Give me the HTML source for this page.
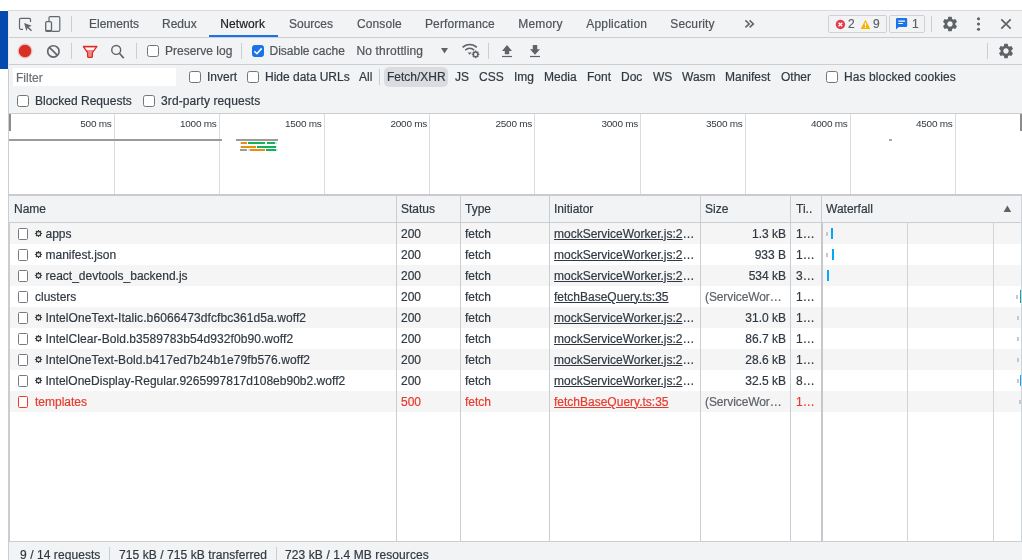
<!DOCTYPE html>
<html>
<head>
<meta charset="utf-8">
<title>DevTools - Network</title>
<style>
html,body{margin:0;padding:0;}
body{width:1022px;height:560px;overflow:hidden;background:#fff;position:relative;font-family:"Liberation Sans",sans-serif;font-size:12px;color:#202124;}
.abs{position:absolute;}
.t{position:absolute;white-space:nowrap;font-size:12px;line-height:14px;color:#303942;-webkit-text-stroke:0.200px;}
.tab{color:#505459;top:17px;}
.tab.sel{color:#202124;}
.bar{position:absolute;left:9px;right:0;background:#f1f3f4;}
.hl{position:absolute;background:#cacdd1;}
.cb{position:absolute;width:12px;height:12px;border:1px solid #767676;border-radius:2.500px;background:#fff;box-sizing:border-box;}
.f{top:70px;}
.row{position:absolute;left:10px;width:1012px;height:21px;}
.odd{background:#f5f5f5;}
.ico{position:absolute;left:8px;top:5px;width:10px;height:12px;border:1px solid #757a80;border-radius:1.500px;background:#fff;box-sizing:border-box;}
.row .t{top:4px;}
.u{text-decoration:underline;text-decoration-thickness:0.800px;text-underline-offset:1px;}
.red,.red .t{color:#e83a2d;}
.red .ico{border-color:#e83a2d;}
.ov{position:absolute;font-size:10px;letter-spacing:-0.250px;line-height:12px;top:118.400px;color:#303942;white-space:nowrap;text-align:right;width:60px;transform:scaleY(0.880);transform-origin:0 10.400px;}
</style>
</head>
<body>
<div id="w" style="position:absolute;left:0;top:0;width:1022px;height:560px;will-change:transform;">
<!-- left blue strip -->
<div class="abs" style="left:0;top:11px;width:8px;height:57.500px;background:#0549ae;"></div>
<!-- left border -->
<div class="hl" style="left:8px;top:11px;width:1px;height:58px;background:#e6e8ea;"></div>
<div class="hl" style="left:8.300px;top:68.500px;width:1.300px;height:492px;"></div>

<!-- top tab bar -->
<div class="bar" style="top:11px;height:26px;"></div>
<div class="hl" style="left:8px;top:10px;width:1014px;height:1px;background:#d7d9dc;"></div>
<div class="hl" style="left:9px;top:37px;width:1013px;height:1px;"></div>

<!-- second toolbar -->
<div class="bar" style="top:38px;height:26px;"></div>
<div class="hl" style="left:9px;top:64px;width:1013px;height:1px;"></div>

<!-- filter bar -->
<div class="bar" style="top:65px;height:48px;"></div>
<div class="hl" style="left:9px;top:113px;width:1013px;height:1px;"></div>

<!-- TABS -->
<div class="t tab" style="left:89px;">Elements</div>
<div class="t tab" style="left:162px;">Redux</div>
<div class="t tab sel" style="left:220.300px;letter-spacing:0.100px;">Network</div>
<div class="abs" style="left:209px;top:35px;width:69px;height:2px;background:#1a73e8;"></div>
<div class="t tab" style="left:289px;">Sources</div>
<div class="t tab" style="left:357px;letter-spacing:0.120px;">Console</div>
<div class="t tab" style="left:425px;letter-spacing:0.100px;">Performance</div>
<div class="t tab" style="left:518.300px;letter-spacing:0.150px;">Memory</div>
<div class="t tab" style="left:586.300px;letter-spacing:0.200px;">Application</div>
<div class="t tab" style="left:670.300px;letter-spacing:0.120px;">Security</div>

<svg class="abs" style="left:744px;top:19px;" width="12" height="10" viewBox="0 0 12 10"><path d="M1.400 1.400l3.800 3.500-3.800 3.500M5.600 1.400l3.800 3.500-3.800 3.500" fill="none" stroke="#5f6368" stroke-width="1.500"/></svg>

<!-- inspect icon -->
<svg class="abs" style="left:17px;top:15px;" width="18" height="18" viewBox="0 0 18 18">
<path d="M13.500 7V4.600a1.200 1.200 0 0 0-1.200-1.200H3.700a1.200 1.200 0 0 0-1.200 1.200v8.500a1.200 1.200 0 0 0 1.200 1.200H6" fill="none" stroke="#63676c" stroke-width="1.200"/>
<path d="M7.100 8.100l7.700 2.600-3.100 1.250 3.300 3.300-1.050 1.050-3.300-3.300-1.250 3.100z" fill="#63676c"/>
</svg>
<!-- device icon -->
<svg class="abs" style="left:43px;top:14px;" width="20" height="20" viewBox="0 0 20 20">
<path d="M6 7.5V3.8a1.2 1.2 0 0 1 1.2-1.2h8.4a1.2 1.2 0 0 1 1.2 1.2v12.3a1.2 1.2 0 0 1-1.2 1.2H8.6" fill="none" stroke="#63676c" stroke-width="1.2"/>
<rect x="2.7" y="7.7" width="5.8" height="9.7" rx="1.3" fill="none" stroke="#63676c" stroke-width="1.3"/>
<rect x="2.7" y="15.9" width="5.8" height="1.5" fill="#63676c"/>
</svg>
<div class="hl" style="left:71px;top:16px;width:1px;height:16px;"></div>

<!-- badges -->
<div class="abs" style="left:828px;top:15px;width:59px;height:18px;box-sizing:border-box;border:1px solid #cfd1d4;border-radius:2px;"></div>
<div class="abs" style="left:889px;top:15px;width:36px;height:18px;box-sizing:border-box;border:1px solid #cfd1d4;border-radius:2px;"></div>
<svg class="abs" style="left:835px;top:19px;" width="11" height="11" viewBox="0 0 11 11">
<circle cx="5.400" cy="5.500" r="4.700" fill="#e6394a"/>
<path d="M3.6 3.7l3.6 3.6M7.2 3.7L3.6 7.3" stroke="#fff" stroke-width="1.3"/>
</svg>
<div class="t" style="left:848px;top:17px;color:#5f6368;">2</div>
<svg class="abs" style="left:860px;top:19px;" width="11" height="11" viewBox="0 0 11 11">
<path d="M5.5 0.8L10.3 9.9H0.7z" fill="#f4b400"/>
<path d="M5.5 3.8v3.2M5.5 7.8v1.1" stroke="#fff" stroke-width="1.2"/>
</svg>
<div class="t" style="left:873px;top:17px;color:#5f6368;">9</div>
<svg class="abs" style="left:895px;top:17px;" width="13" height="13" viewBox="0 0 13 13">
<path d="M2.2 1h8.8a1.2 1.2 0 0 1 1.2 1.2v6.6A1.2 1.2 0 0 1 11 10H3.6L1 12.6V2.2A1.2 1.2 0 0 1 2.2 1z" fill="#1a73e8"/>
<path d="M3.300 4.200h6.600M3.300 6.500h4.600" stroke="#fff" stroke-width="1.200"/>
</svg>
<div class="t" style="left:912px;top:17px;color:#5f6368;">1</div>
<div class="hl" style="left:931px;top:16px;width:1px;height:16px;"></div>

<!-- gear 1 -->
<svg class="abs gear" style="left:941px;top:15px;" width="18" height="18" viewBox="0 0 24 24"><path fill="#5f6368" d="M19.14 12.94c.04-.3.06-.61.06-.94 0-.32-.02-.64-.07-.94l2.03-1.58a.49.49 0 0 0 .12-.61l-1.92-3.32a.488.488 0 0 0-.59-.22l-2.39.96c-.5-.38-1.03-.7-1.62-.94l-.36-2.54a.484.484 0 0 0-.48-.41h-3.84c-.24 0-.43.17-.47.41l-.36 2.54c-.59.24-1.13.57-1.62.94l-2.39-.96c-.22-.08-.47 0-.59.22L2.74 8.87c-.12.21-.08.47.12.61l2.03 1.58c-.05.3-.09.63-.09.94s.02.64.07.94l-2.03 1.58a.49.49 0 0 0-.12.61l1.92 3.32c.12.22.37.29.59.22l2.39-.96c.5.38 1.03.7 1.62.94l.36 2.54c.05.24.24.41.48.41h3.84c.24 0 .44-.17.47-.41l.36-2.54c.59-.24 1.13-.56 1.62-.94l2.39.96c.22.08.47 0 .59-.22l1.92-3.32c.12-.22.07-.47-.12-.61l-2.01-1.58zM12 15.6c-1.98 0-3.600-1.62-3.600-3.600s1.620-3.600 3.600-3.600 3.600 1.620 3.600 3.600-1.620 3.600-3.600 3.600z"/></svg>
<!-- dots -->
<svg class="abs" style="left:976px;top:16px;" width="5" height="16" viewBox="0 0 5 16"><circle cx="2.500" cy="2.800" r="1.550" fill="#5f6368"/><circle cx="2.500" cy="8" r="1.550" fill="#5f6368"/><circle cx="2.500" cy="13.200" r="1.550" fill="#5f6368"/></svg>
<!-- close -->
<svg class="abs" style="left:1000px;top:18px;" width="12" height="12" viewBox="0 0 12 12"><path d="M1.300 1.300l9.400 9.400M10.700 1.300L1.300 10.700" stroke="#5f6368" stroke-width="1.700"/></svg>

<!-- TOOLBAR 2 -->
<div class="abs" style="left:17px;top:43px;width:16px;height:16px;border-radius:50%;background:radial-gradient(circle,#d93025 0,#d93025 5.700px,rgba(217,48,37,0.330) 6.500px,rgba(217,48,37,0) 8px);"></div>
<svg class="abs" style="left:46px;top:44px;" width="15" height="15" viewBox="0 0 15 15"><circle cx="7.400" cy="7.400" r="5.700" fill="none" stroke="#63666a" stroke-width="1.650"/><path d="M3.400 3.400l8 8" stroke="#63666a" stroke-width="1.650"/></svg>
<div class="hl" style="left:71px;top:43px;width:1px;height:16px;"></div>
<svg class="abs" style="left:82px;top:45px;" width="16" height="14" viewBox="0 0 16 14"><path d="M3.800 5.100H12.200L10.400 7.600V12.300H5.600V7.600z" fill="#ea8a84"/><path d="M1.400 1.600H14.800L10.400 7.600V11.500Q10.400 12.300 9.600 12.300H6.400Q5.600 12.300 5.600 11.500V7.600z" fill="none" stroke="#de2a20" stroke-width="1.250" stroke-linejoin="round"/><path d="M1 1.500h14.200" stroke="#de2a20" stroke-width="1.400"/></svg>
<svg class="abs" style="left:109px;top:43px;" width="17" height="17" viewBox="0 0 17 17"><circle cx="7.200" cy="6.900" r="4.450" fill="none" stroke="#5f6368" stroke-width="1.450"/><path d="M10.400 10.200l4.300 4.900" stroke="#5f6368" stroke-width="1.600"/></svg>
<div class="hl" style="left:136px;top:43px;width:1px;height:16px;"></div>
<div class="cb" style="left:147px;top:45px;"></div>
<div class="t" style="left:165px;top:44px;color:#505459;">Preserve log</div>
<div class="hl" style="left:241px;top:43px;width:1px;height:16px;"></div>
<div class="cb" style="left:252px;top:45px;background:#1a73e8;border-color:#1a73e8;"></div>
<svg class="abs" style="left:252px;top:45px;" width="12" height="12" viewBox="0 0 12 12"><path d="M2.400 6.200l2.500 2.500 4.800-5.300" fill="none" stroke="#fff" stroke-width="1.6"/></svg>
<div class="t" style="left:269.500px;top:44px;color:#505459;">Disable cache</div>
<div class="t" style="left:356.500px;top:44px;color:#505459;letter-spacing:0.150px;">No throttling</div>
<svg class="abs" style="left:440px;top:47px;" width="9" height="7" viewBox="0 0 9 7"><path d="M1 1h7L4.5 6.4z" fill="#5f6368"/></svg>
<!-- wifi gear -->
<svg class="abs" style="left:461px;top:42px;" width="20" height="18" viewBox="0 0 20 18">
<path d="M1.6 5.4a10 10 0 0 1 14.2 0" fill="none" stroke="#5f6368" stroke-width="1.5"/>
<path d="M4.2 8.2a6.4 6.4 0 0 1 9 0" fill="none" stroke="#5f6368" stroke-width="1.5"/>
<path d="M6.6 10.4h4.2l-2.1 2.4z" fill="#5f6368"/>
<circle cx="14.6" cy="12.4" r="2.3" fill="none" stroke="#5f6368" stroke-width="1.5"/>
<path d="M14.6 8.6v1.4M14.6 14.8v1.4M10.8 12.4h1.4M17 12.4h1.4M11.9 9.7l1 1M16.3 14.1l1 1M11.9 15.1l1-1M16.3 10.7l1-1" stroke="#5f6368" stroke-width="1.3"/>
</svg>
<div class="hl" style="left:488px;top:43px;width:1px;height:16px;"></div>
<svg class="abs" style="left:501px;top:44px;" width="12" height="14" viewBox="0 0 12 14"><path d="M6 1L11 7H8.2v3.2H3.800V7H1z" fill="#5f6368"/><rect x="1" y="11.900" width="10" height="1.2" fill="#5f6368"/></svg>
<svg class="abs" style="left:529px;top:44px;" width="12" height="14" viewBox="0 0 12 14"><path d="M6 10.800L11 5.300H8.200V1H3.800v4.300H1z" fill="#5f6368"/><rect x="1" y="11.900" width="10" height="1.200" fill="#5f6368"/></svg>
<div class="hl" style="left:987px;top:43px;width:1px;height:16px;"></div>
<svg class="abs gear" style="left:997px;top:42px;" width="18" height="18" viewBox="0 0 24 24"><path fill="#5f6368" d="M19.140 12.940c.04-.3.060-.61.060-.94 0-.32-.02-.64-.07-.94l2.030-1.580a.49.49 0 0 0 .12-.61l-1.920-3.320a.488.488 0 0 0-.59-.22l-2.390.96c-.5-.38-1.030-.7-1.620-.94l-.36-2.540a.484.484 0 0 0-.48-.41h-3.840c-.24 0-.43.170-.47.410l-.36 2.540c-.59.240-1.130.57-1.620.94l-2.390-.96c-.22-.08-.47 0-.59.220L2.740 8.870c-.12.210-.08.470.12.610l2.030 1.580c-.05.300-.09.630-.09.940s.02.640.07.940l-2.030 1.580a.49.49 0 0 0-.12.610l1.920 3.320c.12.220.37.290.59.220l2.390-.96c.5.380 1.030.7 1.620.94l.36 2.540c.05.240.24.410.48.410h3.840c.24 0 .44-.17.470-.41l.36-2.540c.59-.24 1.130-.56 1.620-.94l2.390.96c.22.080.47 0 .59-.22l1.920-3.320c.12-.22.070-.47-.12-.61l-2.010-1.580zM12 15.600c-1.980 0-3.600-1.620-3.600-3.600s1.620-3.600 3.600-3.600 3.600 1.620 3.600 3.600-1.620 3.600-3.600 3.600z"/></svg>

<!-- FILTER BAR -->
<div class="abs" style="left:13px;top:68px;width:163px;height:18px;background:#fff;"></div>
<div class="t" style="left:16px;top:71px;color:#6b6f75;">Filter</div>
<div class="cb" style="left:189px;top:71px;"></div>
<div class="t f" style="left:207px;">Invert</div>
<div class="cb" style="left:247px;top:71px;"></div>
<div class="t f" style="left:265px;">Hide data URLs</div>
<div class="t f" style="left:359px;">All</div>
<div class="hl" style="left:379px;top:69px;width:1px;height:16px;"></div>
<div class="abs" style="left:384px;top:67px;width:64px;height:20px;background:#dadce0;border-radius:5px;"></div>
<div class="t f" style="left:387px;">Fetch/XHR</div>
<div class="t f" style="left:455px;">JS</div>
<div class="t f" style="left:479px;">CSS</div>
<div class="t f" style="left:514px;">Img</div>
<div class="t f" style="left:544px;">Media</div>
<div class="t f" style="left:587px;">Font</div>
<div class="t f" style="left:621px;">Doc</div>
<div class="t f" style="left:653px;">WS</div>
<div class="t f" style="left:682px;">Wasm</div>
<div class="t f" style="left:725px;">Manifest</div>
<div class="t f" style="left:781px;">Other</div>
<div class="cb" style="left:826px;top:71px;"></div>
<div class="t f" style="left:844px;letter-spacing:0.100px;">Has blocked cookies</div>
<div class="cb" style="left:17px;top:95px;"></div>
<div class="t" style="left:35px;top:94px;">Blocked Requests</div>
<div class="cb" style="left:143px;top:95px;"></div>
<div class="t" style="left:161px;top:94px;letter-spacing:0.110px;">3rd-party requests</div>

<!-- OVERVIEW -->
<div class="abs" style="left:9px;top:114px;width:1013px;height:80px;background:#fff;"></div>
<div class="abs" style="left:113.5px;top:114px;width:1px;height:80px;background:#dcdcdc;"></div>
<div class="ov" style="left:51.6px;">500 ms</div>
<div class="abs" style="left:218.5px;top:114px;width:1px;height:80px;background:#dcdcdc;"></div>
<div class="ov" style="left:156.6px;">1000 ms</div>
<div class="abs" style="left:323.5px;top:114px;width:1px;height:80px;background:#dcdcdc;"></div>
<div class="ov" style="left:261.6px;">1500 ms</div>
<div class="abs" style="left:429.0px;top:114px;width:1px;height:80px;background:#dcdcdc;"></div>
<div class="ov" style="left:367.1px;">2000 ms</div>
<div class="abs" style="left:534.0px;top:114px;width:1px;height:80px;background:#dcdcdc;"></div>
<div class="ov" style="left:472.1px;">2500 ms</div>
<div class="abs" style="left:640px;top:114px;width:1px;height:80px;background:#dcdcdc;"></div>
<div class="ov" style="left:578.1px;">3000 ms</div>
<div class="abs" style="left:744.5px;top:114px;width:1px;height:80px;background:#dcdcdc;"></div>
<div class="ov" style="left:682.6px;">3500 ms</div>
<div class="abs" style="left:849.5px;top:114px;width:1px;height:80px;background:#dcdcdc;"></div>
<div class="ov" style="left:787.6px;">4000 ms</div>
<div class="abs" style="left:954.5px;top:114px;width:1px;height:80px;background:#dcdcdc;"></div>
<div class="ov" style="left:892.6px;">4500 ms</div>
<div class="abs" style="left:9px;top:114px;width:2px;height:17px;background:#8c8c8c;"></div>
<div class="abs" style="left:1020px;top:114px;width:2px;height:17px;background:#8c8c8c;"></div>
<div class="abs" style="left:9px;top:139.300px;width:213px;height:2.200px;background:#9b9b9b;"></div>
<div class="abs" style="left:236px;top:139.300px;width:42px;height:2px;background:#9b9b9b;"></div>
<div class="abs" style="left:239.5px;top:142.300px;width:1.5px;height:2px;background:#c9e6f7;"></div>
<div class="abs" style="left:241px;top:142.300px;width:6.2px;height:2px;background:#e8920c;"></div>
<div class="abs" style="left:248px;top:142.300px;width:17.2px;height:2px;background:#12b355;"></div>
<div class="abs" style="left:267px;top:142.300px;width:8.4px;height:2px;background:#12b355;"></div>
<div class="abs" style="left:275.4px;top:142.300px;width:1.6px;height:2px;background:#c9e6f7;"></div>
<div class="abs" style="left:239.5px;top:145.5px;width:1.5px;height:2px;background:#c9e6f7;"></div>
<div class="abs" style="left:241px;top:145.5px;width:15.4px;height:2px;background:#e8920c;"></div>
<div class="abs" style="left:257.4px;top:145.5px;width:18.8px;height:2px;background:#12b355;"></div>
<div class="abs" style="left:276.2px;top:145.5px;width:1.3px;height:2px;background:#c9e6f7;"></div>
<div class="abs" style="left:240.2px;top:148.8px;width:6.8px;height:2px;background:#9b9b9b;"></div>
<div class="abs" style="left:248px;top:148.8px;width:2px;height:2px;background:#c9e6f7;"></div>
<div class="abs" style="left:250px;top:148.8px;width:15px;height:2px;background:#e8920c;"></div>
<div class="abs" style="left:266px;top:148.8px;width:10.4px;height:2px;background:#12b355;"></div>
<div class="abs" style="left:276.4px;top:148.8px;width:1.6px;height:2px;background:#c9e6f7;"></div>
<div class="abs" style="left:888.5px;top:139px;width:3.0px;height:2px;background:#a8a8a8;"></div>

<!-- TABLE -->
<div class="hl" style="left:9px;top:194px;width:1013px;height:2px;background:#c9cbcf;"></div>
<div class="bar" style="top:196px;height:26px;"></div>
<div class="hl" style="left:9px;top:222px;width:1013px;height:1px;"></div>
<div class="t" style="left:14px;top:202px;">Name</div>
<div class="t" style="left:401px;top:202px;">Status</div>
<div class="t" style="left:465px;top:202px;">Type</div>
<div class="t" style="left:554px;top:202px;">Initiator</div>
<div class="t" style="left:705px;top:202px;">Size</div>
<div class="t" style="left:796px;top:202px;">Ti..</div>
<div class="t" style="left:826px;top:202px;">Waterfall</div>
<svg class="abs" style="left:1003px;top:205px;" width="9" height="8" viewBox="0 0 9 8"><path d="M4.4 0.500L8.200 7H0.600z" fill="#5f6368"/></svg>
<div class="row odd" style="top:223px;">
<div class="ico"></div>
<svg class="abs" style="left:24px;top:5.800px;" width="9" height="9" viewBox="0 0 9 9"><path d="M4.500 0.900v7.200M0.900 4.500h7.200M1.950 1.950l5.100 5.100M1.950 7.050l5.100-5.100" stroke="#3c4043" stroke-width="1.150"/><circle cx="4.500" cy="4.500" r="2.750" fill="#3c4043"/><circle cx="4.500" cy="4.500" r="1.500" fill="#fff"/><path d="M4.500 4.500V3.300" stroke="#3c4043" stroke-width="0.500"/></svg>
<div class="t" style="left:35.5px;">apps</div>
<div class="t" style="left:391px;">200</div>
<div class="t" style="left:455px;">fetch</div>
<div class="t" style="left:544px;"><span class="u">mockServiceWorker.js:2</span>…</div>
<div class="t" style="right:236px;">1.3 kB</div>
<div class="t" style="left:786px;">1…</div>
</div>
<div class="row" style="top:244px;">
<div class="ico"></div>
<svg class="abs" style="left:24px;top:5.800px;" width="9" height="9" viewBox="0 0 9 9"><path d="M4.500 0.900v7.200M0.900 4.500h7.200M1.950 1.950l5.100 5.100M1.950 7.050l5.100-5.100" stroke="#3c4043" stroke-width="1.150"/><circle cx="4.500" cy="4.500" r="2.750" fill="#3c4043"/><circle cx="4.500" cy="4.500" r="1.500" fill="#fff"/><path d="M4.500 4.500V3.300" stroke="#3c4043" stroke-width="0.500"/></svg>
<div class="t" style="left:35.5px;">manifest.json</div>
<div class="t" style="left:391px;">200</div>
<div class="t" style="left:455px;">fetch</div>
<div class="t" style="left:544px;"><span class="u">mockServiceWorker.js:2</span>…</div>
<div class="t" style="right:236px;">933 B</div>
<div class="t" style="left:786px;">1…</div>
</div>
<div class="row odd" style="top:265px;">
<div class="ico"></div>
<svg class="abs" style="left:24px;top:5.800px;" width="9" height="9" viewBox="0 0 9 9"><path d="M4.500 0.900v7.200M0.900 4.500h7.200M1.950 1.950l5.100 5.100M1.950 7.050l5.100-5.100" stroke="#3c4043" stroke-width="1.150"/><circle cx="4.500" cy="4.500" r="2.750" fill="#3c4043"/><circle cx="4.500" cy="4.500" r="1.500" fill="#fff"/><path d="M4.500 4.500V3.300" stroke="#3c4043" stroke-width="0.500"/></svg>
<div class="t" style="left:35.5px;">react_devtools_backend.js</div>
<div class="t" style="left:391px;">200</div>
<div class="t" style="left:455px;">fetch</div>
<div class="t" style="left:544px;"><span class="u">mockServiceWorker.js:2</span>…</div>
<div class="t" style="right:236px;">534 kB</div>
<div class="t" style="left:786px;">3…</div>
</div>
<div class="row" style="top:286px;">
<div class="ico"></div>
<div class="t" style="left:25px;">clusters</div>
<div class="t" style="left:391px;">200</div>
<div class="t" style="left:455px;">fetch</div>
<div class="t u" style="left:544px;">fetchBaseQuery.ts:35</div>
<div class="t" style="left:695px;color:#5f6368;letter-spacing:-0.100px;">(ServiceWor…</div>
<div class="t" style="left:786px;">1…</div>
</div>
<div class="row odd" style="top:307px;">
<div class="ico"></div>
<svg class="abs" style="left:24px;top:5.800px;" width="9" height="9" viewBox="0 0 9 9"><path d="M4.500 0.900v7.200M0.900 4.500h7.200M1.950 1.950l5.100 5.100M1.950 7.050l5.100-5.100" stroke="#3c4043" stroke-width="1.150"/><circle cx="4.500" cy="4.500" r="2.750" fill="#3c4043"/><circle cx="4.500" cy="4.500" r="1.500" fill="#fff"/><path d="M4.500 4.500V3.300" stroke="#3c4043" stroke-width="0.500"/></svg>
<div class="t" style="left:35.5px;letter-spacing:0.087px;">IntelOneText-Italic.b6066473dfcfbc361d5a.woff2</div>
<div class="t" style="left:391px;">200</div>
<div class="t" style="left:455px;">fetch</div>
<div class="t" style="left:544px;"><span class="u">mockServiceWorker.js:2</span>…</div>
<div class="t" style="right:236px;">31.0 kB</div>
<div class="t" style="left:786px;">1…</div>
</div>
<div class="row" style="top:328px;">
<div class="ico"></div>
<svg class="abs" style="left:24px;top:5.800px;" width="9" height="9" viewBox="0 0 9 9"><path d="M4.500 0.900v7.200M0.900 4.500h7.200M1.950 1.950l5.100 5.100M1.950 7.050l5.100-5.100" stroke="#3c4043" stroke-width="1.150"/><circle cx="4.500" cy="4.500" r="2.750" fill="#3c4043"/><circle cx="4.500" cy="4.500" r="1.500" fill="#fff"/><path d="M4.500 4.500V3.300" stroke="#3c4043" stroke-width="0.500"/></svg>
<div class="t" style="left:35.5px;letter-spacing:0.071px;">IntelClear-Bold.b3589783b54d932f0b90.woff2</div>
<div class="t" style="left:391px;">200</div>
<div class="t" style="left:455px;">fetch</div>
<div class="t" style="left:544px;"><span class="u">mockServiceWorker.js:2</span>…</div>
<div class="t" style="right:236px;">86.7 kB</div>
<div class="t" style="left:786px;">1…</div>
</div>
<div class="row odd" style="top:349px;">
<div class="ico"></div>
<svg class="abs" style="left:24px;top:5.800px;" width="9" height="9" viewBox="0 0 9 9"><path d="M4.500 0.900v7.200M0.900 4.500h7.200M1.950 1.950l5.100 5.100M1.950 7.050l5.100-5.100" stroke="#3c4043" stroke-width="1.150"/><circle cx="4.500" cy="4.500" r="2.750" fill="#3c4043"/><circle cx="4.500" cy="4.500" r="1.500" fill="#fff"/><path d="M4.500 4.500V3.300" stroke="#3c4043" stroke-width="0.500"/></svg>
<div class="t" style="left:35.5px;letter-spacing:0.09px;">IntelOneText-Bold.b417ed7b24b1e79fb576.woff2</div>
<div class="t" style="left:391px;">200</div>
<div class="t" style="left:455px;">fetch</div>
<div class="t" style="left:544px;"><span class="u">mockServiceWorker.js:2</span>…</div>
<div class="t" style="right:236px;">28.6 kB</div>
<div class="t" style="left:786px;">1…</div>
</div>
<div class="row" style="top:370px;">
<div class="ico"></div>
<svg class="abs" style="left:24px;top:5.800px;" width="9" height="9" viewBox="0 0 9 9"><path d="M4.500 0.900v7.200M0.900 4.500h7.200M1.950 1.950l5.100 5.100M1.950 7.050l5.100-5.100" stroke="#3c4043" stroke-width="1.150"/><circle cx="4.500" cy="4.500" r="2.750" fill="#3c4043"/><circle cx="4.500" cy="4.500" r="1.500" fill="#fff"/><path d="M4.500 4.500V3.300" stroke="#3c4043" stroke-width="0.500"/></svg>
<div class="t" style="left:35.5px;letter-spacing:0.02px;">IntelOneDisplay-Regular.9265997817d108eb90b2.woff2</div>
<div class="t" style="left:391px;">200</div>
<div class="t" style="left:455px;">fetch</div>
<div class="t" style="left:544px;"><span class="u">mockServiceWorker.js:2</span>…</div>
<div class="t" style="right:236px;">32.5 kB</div>
<div class="t" style="left:786px;">8…</div>
</div>
<div class="row odd red" style="top:391px;">
<div class="ico"></div>
<div class="t" style="left:25px;">templates</div>
<div class="t" style="left:391px;">500</div>
<div class="t" style="left:455px;">fetch</div>
<div class="t u" style="left:544px;">fetchBaseQuery.ts:35</div>
<div class="t" style="left:695px;color:#5f6368;letter-spacing:-0.100px;">(ServiceWor…</div>
<div class="t" style="left:786px;">1…</div>
</div>
<div class="hl" style="left:396px;top:196px;width:1px;height:345px;"></div>
<div class="hl" style="left:460px;top:196px;width:1px;height:345px;"></div>
<div class="hl" style="left:549px;top:196px;width:1px;height:345px;"></div>
<div class="hl" style="left:700px;top:196px;width:1px;height:345px;"></div>
<div class="hl" style="left:790px;top:196px;width:1px;height:345px;"></div>
<div class="hl" style="left:821px;top:196px;width:1px;height:26px;"></div>
<div class="hl" style="left:821px;top:223px;width:2px;height:318px;background:#c6c8cc;"></div>
<div class="abs" style="left:907px;top:223px;width:1px;height:318px;background:#d4d4d4;"></div>
<div class="abs" style="left:993px;top:223px;width:1px;height:318px;background:#d4d4d4;"></div>
<div class="hl" style="left:1021px;top:196px;width:1px;height:345px;background:#cfd4dc;"></div>
<div class="abs" style="left:826px;top:231.5px;width:2px;height:4.5px;background:#c8c8c8;"></div>
<div class="abs" style="left:831px;top:228px;width:2px;height:11px;background:#03a9f4;"></div>
<div class="abs" style="left:826px;top:252.5px;width:2px;height:4.5px;background:#c8c8c8;"></div>
<div class="abs" style="left:832px;top:249px;width:2px;height:11px;background:#03a9f4;"></div>
<div class="abs" style="left:827px;top:270px;width:2px;height:11px;background:#03a9f4;"></div>
<div class="abs" style="left:1016px;top:294.5px;width:2px;height:4.5px;background:#c8c8c8;"></div>
<div class="abs" style="left:1020px;top:290px;width:1px;height:13px;background:#12a5a5;"></div>
<div class="abs" style="left:1017px;top:315.5px;width:2px;height:4.5px;background:#c8c8c8;"></div>
<div class="abs" style="left:1017px;top:336.5px;width:2px;height:4.5px;background:#c8c8c8;"></div>
<div class="abs" style="left:1017px;top:357.5px;width:2px;height:4.5px;background:#c8c8c8;"></div>
<div class="abs" style="left:1017px;top:378.5px;width:2px;height:4.5px;background:#c8c8c8;"></div>
<div class="abs" style="left:1020px;top:375px;width:1px;height:11px;background:#03a9f4;"></div>
<div class="abs" style="left:1019px;top:399.5px;width:2px;height:4.5px;background:#c8c8c8;"></div>

<!-- STATUS BAR -->
<div class="hl" style="left:9px;top:541px;width:1013px;height:1px;"></div>
<div class="bar" style="top:542px;height:18px;"></div>
<div class="t" style="left:20px;top:547.500px;letter-spacing:0.070px;">9 / 14 requests</div>
<div class="hl" style="left:109px;top:547px;width:1px;height:13px;"></div>
<div class="t" style="left:119px;top:547.500px;letter-spacing:0.075px;">715 kB / 715 kB transferred</div>
<div class="hl" style="left:276px;top:547px;width:1px;height:13px;"></div>
<div class="t" style="left:285px;top:547.500px;letter-spacing:0.100px;">723 kB / 1.4 MB resources</div>
</div>
</body>
</html>
